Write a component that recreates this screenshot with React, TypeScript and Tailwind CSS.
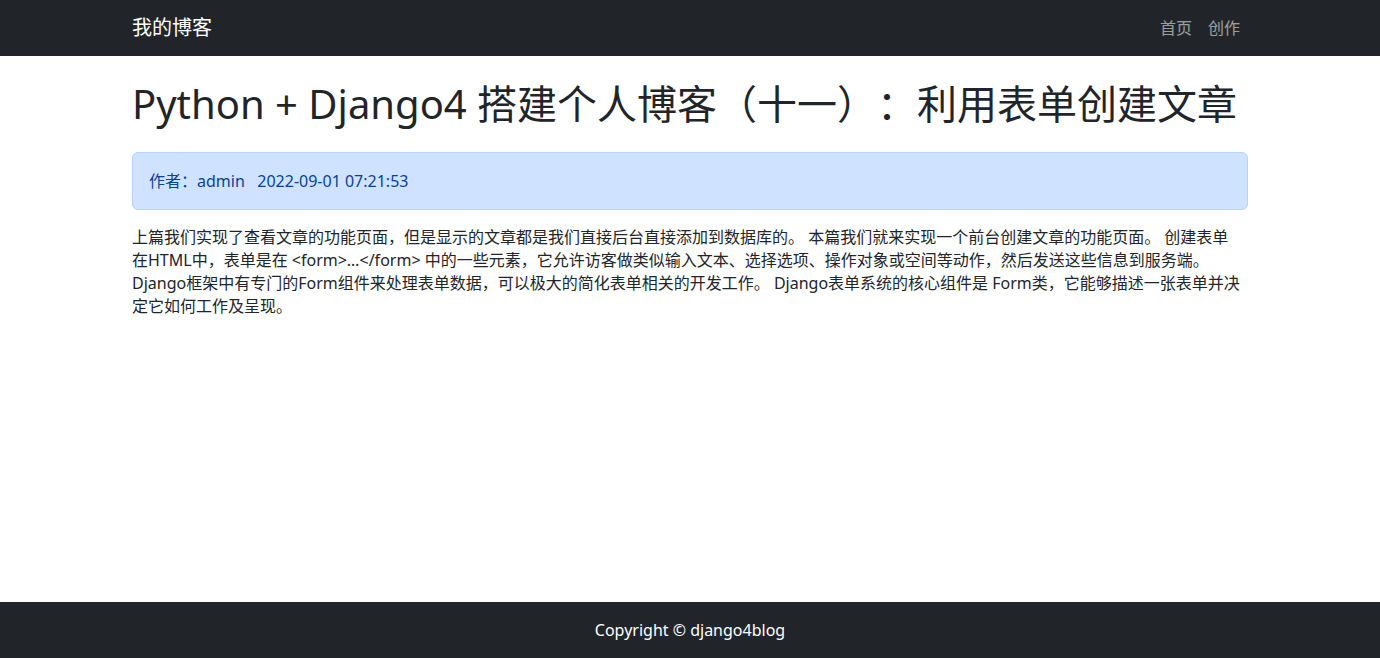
import React from 'react';

export default function App() {
  return (
    <div className="min-h-screen flex flex-col bg-white text-[#212529] font-['Noto_Sans','Noto_Sans_CJK_SC',sans-serif] [text-spacing-trim:space-all]">
      {/* Navbar */}
      <nav className="bg-[#212529] h-14">
        <div className="max-w-[1140px] mx-auto px-3 h-full flex items-center justify-between">
          <a className="text-white text-xl leading-[30px]">我的博客</a>
          <div className="flex items-center">
            <a className="px-2 text-base leading-6 text-white/55">首页</a>
            <a className="px-2 text-base leading-6 text-white/55">创作</a>
          </div>
        </div>
      </nav>

      {/* Main */}
      <main className="flex-1">
        <div className="max-w-[1140px] mx-auto px-3">
          <h1 className="mt-6 mb-6 text-[40px] leading-[48px] font-normal whitespace-nowrap">
            Python + Django4 搭建个人博客（十一）：利用表单创建文章
          </h1>

          <div className="mb-4 rounded-md border border-[#b6d4fe] bg-[#cfe2ff] px-4 py-4 text-base leading-6 text-[#084298]">
            作者：admin&nbsp;&nbsp;&nbsp;2022-09-01 07:21:53
          </div>

          <p className="text-base leading-[23px]">
            上篇我们实现了查看文章的功能页面，但是显示的文章都是我们直接后台直接添加到数据库的。 本篇我们就来实现一个前台创建文章的功能页面。 创建表单
            <br />
            在HTML中，表单是在 &lt;form&gt;…&lt;/form&gt; 中的一些元素，它允许访客做类似输入文本、选择选项、操作对象或空间等动作，然后发送这些信息到服务端。
            <br />
            Django框架中有专门的Form组件来处理表单数据，可以极大的简化表单相关的开发工作。 Django表单系统的核心组件是 Form类，它能够描述一张表单并决
            <br />
            定它如何工作及呈现。
          </p>
        </div>
      </main>

      {/* Footer */}
      <footer className="bg-[#212529] py-4">
        <p className="text-center text-white text-base leading-6">Copyright © django4blog</p>
      </footer>
    </div>
  );
}
